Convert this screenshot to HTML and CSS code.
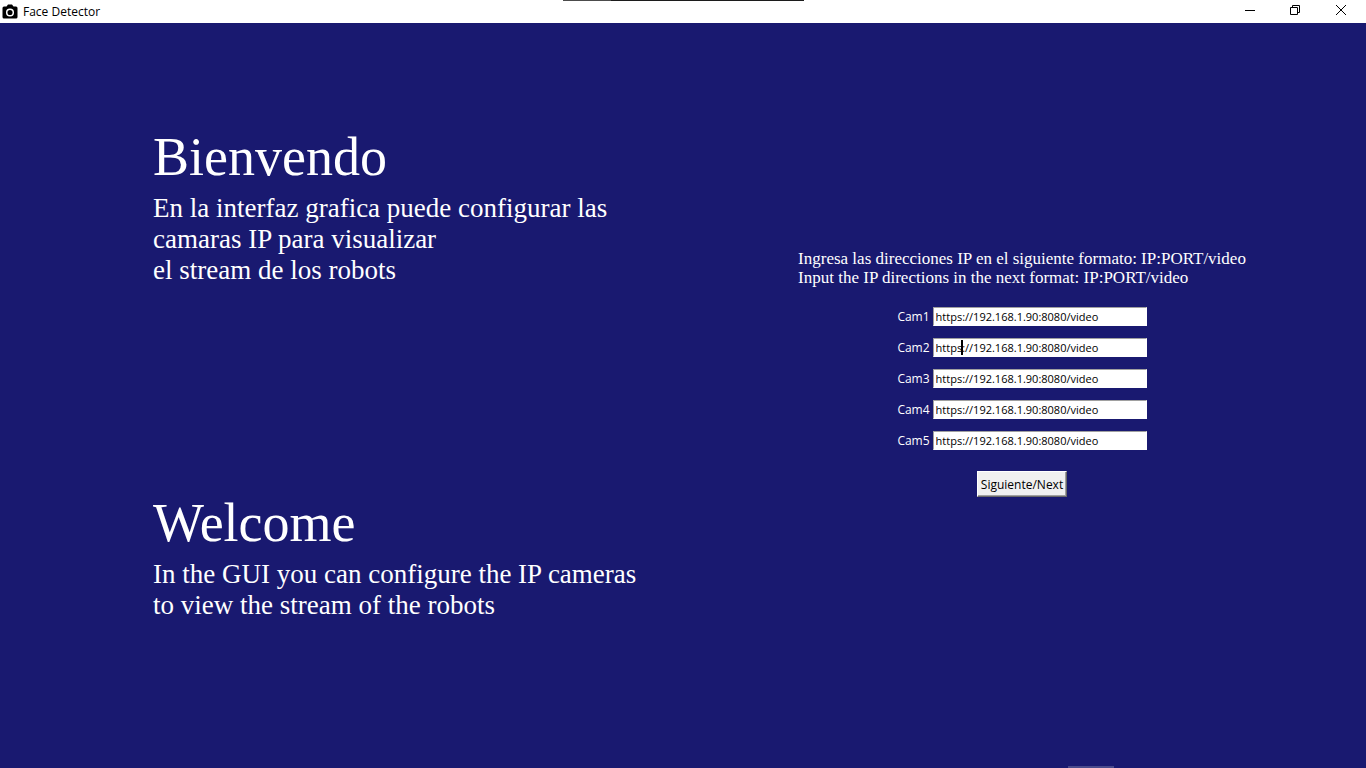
FILE: index.html
```html
<!DOCTYPE html>
<html lang="es">
<head>
<meta charset="utf-8">
<title>Face Detector</title>
<link rel="stylesheet" href="styles.css">
</head>
<body>
<header class="titlebar">
  <div class="app">
    <svg class="app-icon" width="16" height="16" viewBox="0 0 16 16" aria-hidden="true">
      <path fill="#000" d="M4.500 2.500 6 .5h4l1.500 2H14q1.500 0 1.500 1.500v9q0 1.500-1.500 1.500H2Q.5 14.500.5 13V4Q.5 2.500 2 2.500z"/>
      <circle cx="8" cy="8.500" r="3.300" fill="none" stroke="#fff" stroke-width="1.500"/>
    </svg>
    <span class="app-title">Face Detector</span>
  </div>
  <div class="controls">
    <button class="control" type="button" aria-label="Minimize"><svg width="12" height="12" viewBox="0 0 12 12"><path d="M2 6.500h10" stroke="#000" fill="none"/></svg></button>
    <button class="control" type="button" aria-label="Restore"><svg width="12" height="12" viewBox="0 0 12 12"><path d="M1.500 3.500h7v7h-7zM3.500 3.500v-2h7v7h-2" stroke="#000" fill="none"/></svg></button>
    <button class="control" type="button" aria-label="Close"><svg width="12" height="12" viewBox="0 0 12 12"><path d="M1 1l10 10M11 1 1 11" stroke="#000" fill="none"/></svg></button>
  </div>
  <div class="top-strip"></div>
</header>
<main class="content">
  <div class="intro">
    <section class="message">
      <h1 class="heading">Bienvendo</h1>
      <p class="lead">En la interfaz grafica puede configurar las<br>camaras IP para visualizar<br>el stream de los robots</p>
    </section>
    <section class="message">
      <h1 class="heading">Welcome</h1>
      <p class="lead">In the GUI you can configure the IP cameras<br>to view the stream of the robots</p>
    </section>
  </div>
  <form class="form">
    <p class="hint">Ingresa las direcciones IP en el siguiente formato: IP:PORT/video<br>Input the IP directions in the next format: IP:PORT/video</p>
    <div class="fields">
      <div class="field"><label for="cam1">Cam1</label><input id="cam1" class="entry" type="text" value="https://192.168.1.90:8080/video"></div>
      <div class="field"><label for="cam2">Cam2</label><input id="cam2" class="entry" type="text" value="https://192.168.1.90:8080/video"><span class="caret"></span></div>
      <div class="field"><label for="cam3">Cam3</label><input id="cam3" class="entry" type="text" value="https://192.168.1.90:8080/video"></div>
      <div class="field"><label for="cam4">Cam4</label><input id="cam4" class="entry" type="text" value="https://192.168.1.90:8080/video"></div>
      <div class="field"><label for="cam5">Cam5</label><input id="cam5" class="entry" type="text" value="https://192.168.1.90:8080/video"></div>
    </div>
    <button class="next" type="button">Siguiente/Next</button>
  </form>
</main>
<div class="bottom-strip"></div>
</body>
</html>
```

FILE: styles.css
```css
* { box-sizing: border-box; }

body {
  margin: 0;
  min-height: 100vh;
  display: flex;
  flex-direction: column;
  background: #191970;
  color: #fff;
  font-family: "Open Sans", "Noto Sans", sans-serif;
  font-size: 12px;
}

.titlebar {
  position: relative;
  display: flex;
  justify-content: space-between;
  height: 23px;
  background: #fff;
  color: #000;
}

.app { display: flex; align-items: center; gap: 5px; padding-left: 2px; }
.app-icon { display: block; }
.controls { display: flex; padding: 0 2px 3px 0; }

.control {
  width: 46px;
  padding: 0;
  border: 0;
  background: none;
  display: flex;
  align-items: center;
  justify-content: center;
}

.top-strip {
  position: absolute;
  top: 0;
  left: 563px;
  width: 241px;
  height: 1px;
  background: linear-gradient(to right, #4c4c4c 48px, #1c1c1c 48px);
}

.content {
  flex: 1;
  display: grid;
  grid-template-columns: 1fr 1fr;
}

.intro {
  display: grid;
  grid-template-rows: 1fr 1fr;
  padding: 0 0 13px 153px;
}

.message { padding-top: 104px; }

.heading, .lead, .hint {
  margin: 0;
  font-family: "Liberation Serif", serif;
  font-weight: 400;
}

.heading { font-size: 54px; line-height: 61px; }
.lead { padding-top: 5px; font-size: 27px; line-height: 31px; }

.form {
  display: flex;
  flex-direction: column;
  align-items: center;
  padding: 226px 5px 0 0;
}

.hint { font-size: 17px; line-height: 19px; }

.fields {
  display: flex;
  flex-direction: column;
  gap: 12px;
  padding: 20px 0 21px;
}

.field { position: relative; display: flex; align-items: center; gap: 3px; }

.entry {
  width: 214px;
  height: 19px;
  padding: 0 2px;
  border: 1px solid #fff;
  border-color: #a0a0a0 #fff #fff #a0a0a0;
  border-radius: 0;
  background: #fff;
  color: #000;
  font: inherit;
  font-size: 11px;
}

.caret {
  position: absolute;
  left: 64px;
  top: 2px;
  width: 2px;
  height: 15px;
  background: #000;
}

.next {
  height: 26px;
  padding: 0 3px;
  border: 1px solid;
  border-color: #fff #696969 #696969 #fff;
  box-shadow: inset -1px -1px #a0a0a0;
  background: #f0f0f0;
  color: #000;
  font: inherit;
}

.bottom-strip {
  position: absolute;
  right: 252px;
  bottom: 0;
  width: 46px;
  height: 2px;
  background: #4a4a8c;
}
```
